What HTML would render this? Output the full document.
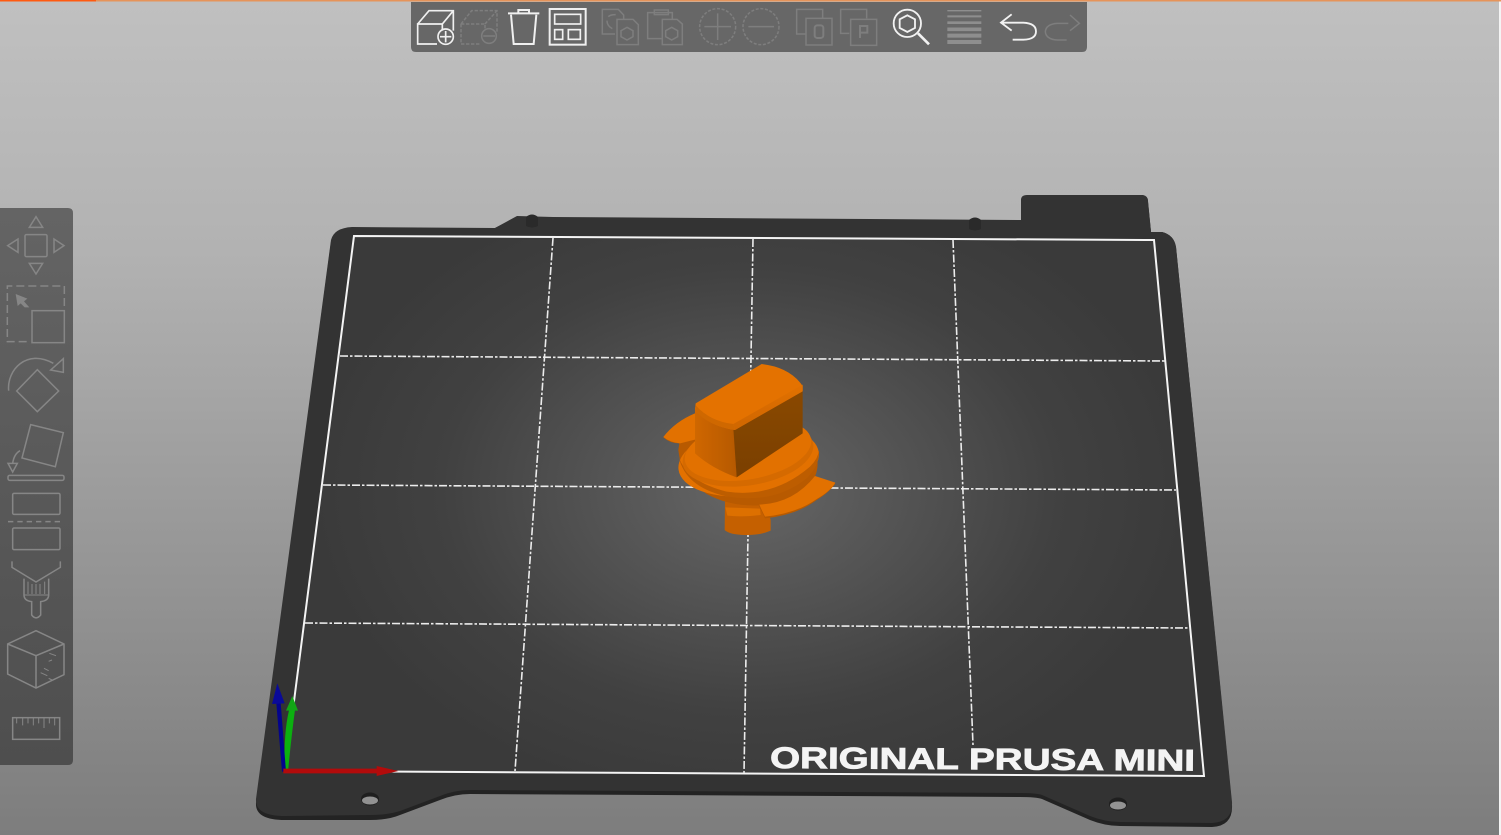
<!DOCTYPE html>
<html><head><meta charset="utf-8"><title>PrusaSlicer</title>
<style>
html,body{margin:0;padding:0;width:1501px;height:835px;overflow:hidden;background:#999}
svg{display:block}
text{font-family:"Liberation Sans",sans-serif}
</style></head><body>
<svg width="1501" height="835" viewBox="0 0 1501 835" xmlns="http://www.w3.org/2000/svg">
<defs>
<linearGradient id="bg" x1="0" y1="0" x2="0" y2="1"><stop offset="0" stop-color="#c0c0c0"/><stop offset="0.3" stop-color="#b2b2b2"/><stop offset="1" stop-color="#7d7d7d"/></linearGradient>
<radialGradient id="bed" gradientUnits="userSpaceOnUse" cx="750" cy="490" r="440" gradientTransform="translate(750 490) scale(1 .72) translate(-750 -490)"><stop offset="0" stop-color="#666"/><stop offset=".3" stop-color="#565656"/><stop offset=".7" stop-color="#414141"/><stop offset="1" stop-color="#3a3a3a"/></radialGradient>
<linearGradient id="lt" x1="0" y1="0" x2="0" y2="1"><stop offset="0" stop-color="#646464"/><stop offset="1" stop-color="#4e4e4e"/></linearGradient>
<linearGradient id="front" x1="0" y1="0" x2="1" y2="0"><stop offset="0" stop-color="#cf6704"/><stop offset="1" stop-color="#b65901"/></linearGradient>
<linearGradient id="side" x1="0" y1="0" x2="0" y2="1"><stop offset="0" stop-color="#8a4800"/><stop offset="1" stop-color="#7a4002"/></linearGradient>
<linearGradient id="ridge" x1="0" y1="0" x2="0" y2="1"><stop offset="0" stop-color="#e27100"/><stop offset="1" stop-color="#cf6600"/></linearGradient>
<filter id="soft" x="-5%" y="-5%" width="110%" height="110%"><feGaussianBlur stdDeviation=".45"/></filter>
<filter id="softer" x="-5%" y="-5%" width="110%" height="110%"><feGaussianBlur stdDeviation=".3"/></filter>
</defs>
<rect width="1501" height="835" fill="url(#bg)"/>
<rect x="1499" width="2" height="835" fill="#f4f4f4"/>
<rect width="1501" height="1.5" fill="#e6945a"/>
<rect width="96" height="1.5" fill="#ff5a10"/>

<!-- plate underside -->
<path d="M256 803 L331 242 Q333 229 352 228 L495 228 L517 217 L553 218 L1021 221 L1021 201 Q1021 196 1027 196 L1143 196 Q1148 197 1148 202 L1151 232 L1162 232 Q1174 235 1176 247 L1232 805 Q1233 826 1212 827 L1120 826 Q1105 826 1090 820 L1042 799 Q1036 797 1020 797 L470 794 Q455 794 440 800 L400 815 Q388 820 370 820 L285 820 Q255 820 256 803Z" fill="#232323"/>
<!-- plate top -->
<path d="M256 799 L331 240 Q334 228 352 227 L495 228 L517 216 L553 217 L1021 220 L1021 200 Q1021 195 1027 195 L1143 195 Q1148 196 1148 201 L1151 232 L1162 232 Q1174 235 1176 247 L1232 802 Q1233 822 1212 823 L1120 822 Q1105 822 1090 816 L1042 795 Q1036 793 1020 793 L470 790 Q455 790 440 796 L400 811 Q388 815 370 815 L285 816 Q255 816 256 799Z" fill="#333"/>
<path d="M526 217 Q532 212 538 217 L538 226 Q532 229 526 226Z" fill="#2a2a2a"/>
<path d="M969 220 Q975 215 981 220 L981 229 Q975 232 969 229Z" fill="#2a2a2a"/>
<ellipse cx="370" cy="799" rx="9" ry="6.5" fill="#1f1f1f"/><ellipse cx="370" cy="800.5" rx="8" ry="4" fill="#929292"/>
<ellipse cx="1118" cy="804" rx="9" ry="6.5" fill="#1f1f1f"/><ellipse cx="1118" cy="805.5" rx="8" ry="4" fill="#939393"/>

<!-- bed -->
<path d="M354 236 L1154 240 L1204 776 L285 771Z" fill="url(#bed)" stroke="#f4f4f4" stroke-width="2"/>
<g stroke="#ececec" stroke-width="1.6" stroke-dasharray="8 2 2.5 2" fill="none">
<path d="M553 238 L515 771"/><path d="M753 239 L744 773"/><path d="M953 240 L973 745"/>
<path d="M340 356 L1165 361"/><path d="M323 485 L1176 490"/><path d="M305 623 L1190 628"/>
</g>
<text x="770" y="768" font-size="30" font-weight="700" fill="#f4f4f4" stroke="#f4f4f4" stroke-width=".8" textLength="425" lengthAdjust="spacingAndGlyphs" transform="rotate(.35 770 768)">ORIGINAL PRUSA MINI</text>

<!-- axes -->
<g transform="translate(250 670) scale(.33333)">
<path d="M104 305 Q100 180 120 110 L136 112 Q124 200 114 305Z" fill="#0bb00f"/>
<path d="M127 78 L144 122 L108 122Z" fill="#12a516"/>
<path d="M96 305 L79 100 L92 98 L108 305Z" fill="#04048c"/>
<path d="M82 40 L104 100 L66 102Z" fill="#0a0a99"/>
<path d="M100 296 L380 296 L380 288 L445 303 L380 318 L380 310 L100 310Z" fill="#b20b0b"/>
</g>

<!-- model -->
<g transform="translate(650 350) scale(.33333)" filter="url(#soft)">
<!-- stem tab -->
<path d="M225 455 L345 455 L362 510 L362 542 Q330 556 285 555 Q238 554 224 540Z" fill="#c56100"/>
<path d="M226 472 L330 476 L332 495 Q280 502 232 497Z" fill="#dd6f00"/>
<!-- flange base & ears -->
<path d="M85 300 Q92 380 170 432 Q240 470 326 466 L345 505 Q440 495 500 450 Q540 425 556 400 L495 380 Q520 320 465 240 L135 190 Q75 215 40 262 Q60 280 88 280Z" fill="#b85a00"/>
<path d="M40 261 Q75 215 135 190 L150 265 L90 280 Q60 277 40 261Z" fill="#e27100"/>
<path d="M495 378 L556 398 Q540 425 500 447 Q440 490 345 500 Q335 480 328 464 Q430 460 495 378Z" fill="#e27100"/>
<!-- flange top -->
<ellipse cx="296" cy="333" rx="212" ry="104" transform="rotate(-7 296 333)" fill="#e37100"/>
<path d="M86 320 Q110 395 230 425 Q370 445 480 350 Q505 325 507 300 Q510 345 470 385 Q370 465 225 438 Q105 410 86 320Z" fill="#bd5d00"/>
<ellipse cx="294" cy="312" rx="198" ry="94" transform="rotate(-9 294 312)" fill="#d56a00"/>
<ellipse cx="294" cy="300" rx="192" ry="88" transform="rotate(-10 294 300)" fill="#e27100"/>
<!-- box -->
<path d="M135 172 Q190 225 252 233 L260 382 Q185 355 135 310Z" fill="url(#front)"/>
<path d="M250 235 L458 115 L458 250 L260 382Z" fill="url(#side)"/>
<path d="M137 160 L335 42 Q420 52 458 108 L458 122 L255 240 Q175 228 135 178Z" fill="#e47200"/>
<path d="M137 166 Q180 214 250 222 L255 240 Q175 228 135 182Z" fill="#cf6703"/>
<path d="M250 222 L458 104 L458 124 L255 240Z" fill="url(#ridge)"/>
</g>

<!-- top toolbar -->
<path d="M411 2 H1087 V47 Q1087 52 1082 52 H416 Q411 52 411 47Z" fill="#676767"/>
<g filter="url(#softer)">
<g transform="translate(405 0) scale(.33333)" fill="none" stroke-width="5">
<g stroke="#f0f0f0">
<path d="M96 132 H38 V72 H112 V92 M38 72 L72 32 H145 V92 M112 72 L145 32"/>
<circle cx="122" cy="110" r="23"/><path d="M122 93 V127 M105 110 H139"/>
<path d="M309 40 H403 M318 44 L326 132 H386 L394 44 M340 38 V30 H372 V38" stroke-width="6"/>
<rect x="434" y="27" width="108" height="107" stroke-width="6"/>
<rect x="449" y="43" width="78" height="29"/><rect x="449" y="89" width="24" height="29"/><rect x="490" y="89" width="36" height="29"/>
</g>
<g stroke="#7e7e7e" stroke-width="4.5">
<path d="M168 72 L200 32 H276 V95 M168 72 V132 H228 M168 72 H240 V90 M240 72 L276 32" stroke-dasharray="10 5"/>
<circle cx="252" cy="108" r="22"/><path d="M235 108 H270"/>
<path d="M630 102 H592 V28 H640 L656 45 V58"/><path d="M636 58 H684 L700 74 V134 H636Z"/><path d="M666 82 L684 92 V110 L666 120 L648 110 V92Z"/><path d="M610 50 Q616 44 632 44"/><path d="M606 62 Q606 78 622 86"/>
<path d="M770 116 H728 V38 H802 V58 M748 30 H790 V44 H748Z"/><path d="M772 58 H816 L832 72 V134 H772Z"/><path d="M800 82 L818 92 V110 L800 120 L782 110 V92Z"/>
<circle cx="938" cy="80" r="54" stroke-dasharray="9 5"/><path d="M938 40 V120 M898 80 H978"/>
</g>
</g>
<g transform="translate(750 0) scale(.33333)" fill="none" stroke-width="4.5">
<g stroke="#7e7e7e">
<circle cx="33" cy="80" r="54" stroke-dasharray="9 5"/><path d="M-5 80 H72"/>
<path d="M168 102 H140 V28 H218 V55"/><rect x="168" y="55" width="78" height="80"/><rect x="194" y="76" width="26" height="38" rx="8" stroke-width="6"/>
<path d="M298 100 H272 V28 H350 V55"/><rect x="302" y="58" width="78" height="78"/><path d="M330 114 V78 H352 V98 H330" stroke-width="6"/>
<path d="M955 70 H922 Q888 72 886 95 Q888 118 922 120 H950 M960 45 L988 70 L960 92"/>
</g>
<g stroke="#8e8e8e">
<path d="M592 32 H694" stroke-width="4"/><path d="M592 49 H694" stroke-width="6"/><path d="M592 68 H694" stroke-width="8"/><path d="M592 88 H694" stroke-width="11"/><path d="M592 107 H694" stroke-width="12"/><path d="M592 126 H694" stroke-width="12"/>
</g>
<g stroke="#f2f2f2" stroke-width="5.5">
<circle cx="472" cy="70" r="41"/><path d="M472 46 L495 58 V84 L472 96 L449 84 V58Z"/>
<path d="M504 100 L537 133" stroke-width="8"/>
<path d="M785 43 L753 68 L785 92 M755 68 H820 Q858 70 858 94 Q858 118 820 119 H788"/>
</g>
</g>
</g>

<!-- left toolbar -->
<path d="M0 208 H68 Q73 208 73 213 V760 Q73 765 68 765 H0Z" fill="url(#lt)"/>
<g filter="url(#softer)">
<g transform="translate(0 200) scale(.33333)" fill="none" stroke="#868686" stroke-width="4.5">
<path d="M108 50 L128 82 H88Z"/><path d="M108 222 L128 190 H88Z"/><path d="M23 137 L54 117 V157Z"/><path d="M192 137 L162 117 V157Z"/>
<rect x="75" y="104" width="66" height="66" rx="4"/>
<path d="M80 425 H22 V258 H193 V320" stroke-dasharray="24 12"/>
<rect x="96" y="332" width="97" height="96"/>
<path d="M47 282 L82 296 L72 304 L88 322 L74 322 L62 310 L53 318Z" fill="#868686" stroke="none"/>
<path d="M26 572 C20 510 80 445 160 490"/><path d="M190 476 L190 517 L152 510Z"/>
<path d="M112 509 L176 573 L112 635 L50 573Z"/>
<path d="M92 674 L190 698 L166 800 L66 774Z"/>
<path d="M60 752 Q42 762 38 790 M24 790 H52 L38 816Z"/>
<rect x="24" y="826" width="168" height="15" rx="5"/>
</g>
<g transform="translate(0 480) scale(.33333)" fill="none" stroke="#868686" stroke-width="4.5">
<rect x="38" y="40" width="142" height="63" rx="4"/>
<path d="M24 125 H192" stroke-dasharray="16 12"/>
<rect x="38" y="144" width="142" height="65" rx="4"/>
<path d="M36 244 V262 L108 306 L181 262 V244"/>
<path d="M72 296 V345 Q72 362 95 365 V405 Q108 422 122 405 V365 Q146 362 146 345 V296"/>
<path d="M72 345 H146 M84 305 V342 M96 312 V342 M108 312 V342 M120 312 V342 M134 305 V342" stroke-width="3"/>
<path d="M108 452 L192 492 V584 L108 624 L23 582 V492Z"/>
<path d="M23 492 L108 527 L192 492 M108 527 V624"/>
<path d="M148 520 L168 527 M146 544 L156 540 M122 578 L142 587 M132 565 L146 572 M146 595 L156 600" stroke-width="3"/>
<rect x="38" y="713" width="141" height="65"/>
<path d="M50 713 V730 M68 713 V736 M84 713 V730 M100 713 V736 M116 713 V730 M132 713 V744 M148 713 V730 M164 713 V736" stroke-width="3"/>
</g>
</g>
</svg>
</body></html>
